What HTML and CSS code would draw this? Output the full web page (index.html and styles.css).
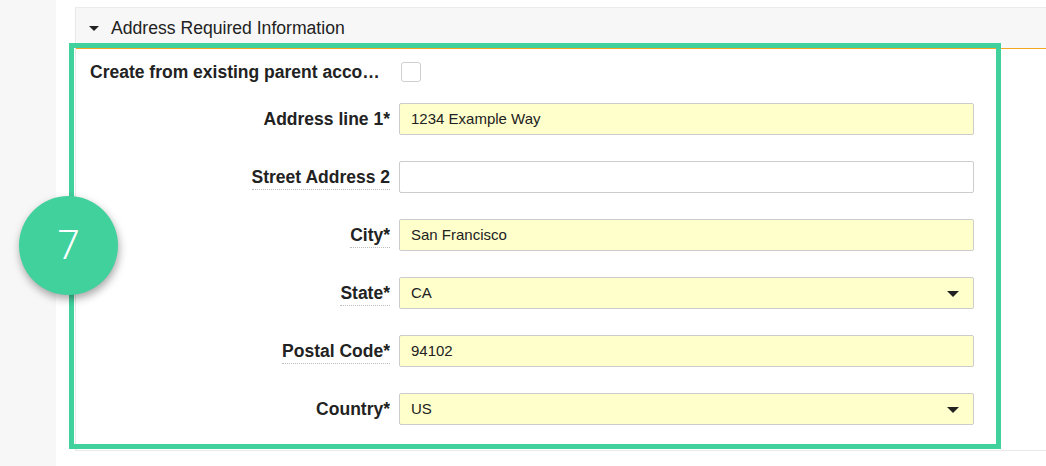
FILE: index.html
```html
<!DOCTYPE html>
<html>
<head>
<meta charset="utf-8">
<link rel="stylesheet" href="styles.css">
</head>
<body>
<div class="page">
  <aside class="sidebar"></aside>
  <main class="main">
    <section class="panel">
      <div class="panel-header">
        <span class="caret"></span>
        <span class="panel-title">Address Required Information</span>
      </div>
      <div class="panel-body">
        <div class="form">
          <div class="row row-check">
            <span class="label label-wide">Create from existing parent account</span>
            <span class="checkbox"></span>
          </div>
          <div class="row">
            <span class="label"><span class="label-text plain">Address line 1*</span></span>
            <div class="input filled">1234 Example Way</div>
          </div>
          <div class="row">
            <span class="label"><span class="label-text">Street Address 2</span></span>
            <div class="input"></div>
          </div>
          <div class="row">
            <span class="label"><span class="label-text">City*</span></span>
            <div class="input filled">San Francisco</div>
          </div>
          <div class="row">
            <span class="label"><span class="label-text">State*</span></span>
            <div class="input filled select">CA<span class="arrow"></span></div>
          </div>
          <div class="row">
            <span class="label"><span class="label-text">Postal Code*</span></span>
            <div class="input filled">94102</div>
          </div>
          <div class="row">
            <span class="label"><span class="label-text plain">Country*</span></span>
            <div class="input filled select">US<span class="arrow"></span></div>
          </div>
        </div>
      </div>
      <div class="highlight"></div>
    </section>
  </main>
  <div class="badge">7</div>
</div>
</body>
</html>
```
FILE: styles.css
```css
* { box-sizing: border-box; }
html, body { margin: 0; padding: 0; }
body {
  font-family: "Liberation Sans", Arial, sans-serif;
  color: #222;
  background: #fff;
  width: 1046px;
  height: 466px;
  overflow: hidden;
}
.page {
  position: relative;
  display: flex;
  height: 466px;
  overflow: hidden;
}
.sidebar {
  width: 56px;
  flex: none;
  background: #f7f7f7;
}
.main {
  flex: 1;
  padding: 7px 0 0 19px;
  min-width: 0;
}
.panel {
  position: relative;
  border-left: 1px solid #e8e8e8;
  border-bottom: 1px solid #e8e8e8;
}
.panel-header {
  height: 42px;
  background: #f7f7f7;
  border-top: 1px solid #ececec;
  border-bottom: 1px solid #f5a623;
  display: flex;
  align-items: center;
  padding-left: 13px;
}
.caret {
  width: 0;
  height: 0;
  border-left: 5px solid transparent;
  border-right: 5px solid transparent;
  border-top: 5px solid #222;
  margin-right: 12px;
  margin-top: 1px;
}
.panel-title {
  font-size: 17.6px;
  color: #222;
}
.panel-body {
  padding: 13px 0 25px 14px;
}
.form {
  display: flex;
  flex-direction: column;
  gap: 26px;
}
.row {
  display: grid;
  grid-template-columns: 300px 575px;
  column-gap: 9px;
  align-items: center;
  height: 32px;
}
.row-check {
  height: 20px;
  margin-bottom: -5px;
}
.label {
  font-size: 17.5px;
  font-weight: bold;
  text-align: right;
  white-space: nowrap;
  overflow: hidden;
  text-overflow: ellipsis;
  color: #222;
  padding-top: 2px;
}
.label-wide {
  text-align: left;
  padding-right: 2px;
  padding-top: 1px;
}
.label-text {
  display: inline-block;
  border-bottom: 1px dotted #bdbdbd;
  padding-bottom: 1px;
  line-height: 21px;
}
.label-text.plain {
  border-bottom-color: transparent;
}
.checkbox {
  width: 20px;
  height: 20px;
  border: 1px solid #cfcfcf;
  border-radius: 3px;
  background: #fff;
  margin-left: 2px;
}
.input {
  position: relative;
  height: 32px;
  border: 1px solid #cccccc;
  border-radius: 2px;
  background: #fff;
  font-size: 15px;
  line-height: 30px;
  padding-left: 11px;
  color: #222;
}
.input.filled {
  background: #ffffcc;
}
.arrow {
  position: absolute;
  right: 14px;
  top: 13px;
  width: 0;
  height: 0;
  border-left: 6px solid transparent;
  border-right: 6px solid transparent;
  border-top: 6px solid #222;
}
.highlight {
  position: absolute;
  left: -7px;
  top: 36px;
  width: 932px;
  height: 406px;
  border: 5px solid #40d19d;
  pointer-events: none;
}
.badge {
  position: absolute;
  left: 19px;
  top: 196px;
  width: 99px;
  height: 99px;
  border-radius: 50%;
  background: #40d19d;
  color: #fff;
  font-family: Roboto, "Open Sans", sans-serif;
  font-weight: 300;
  font-size: 40px;
  display: flex;
  align-items: center;
  justify-content: center;
  box-shadow: 1px 4px 8px rgba(0, 0, 0, 0.35);
}
```
